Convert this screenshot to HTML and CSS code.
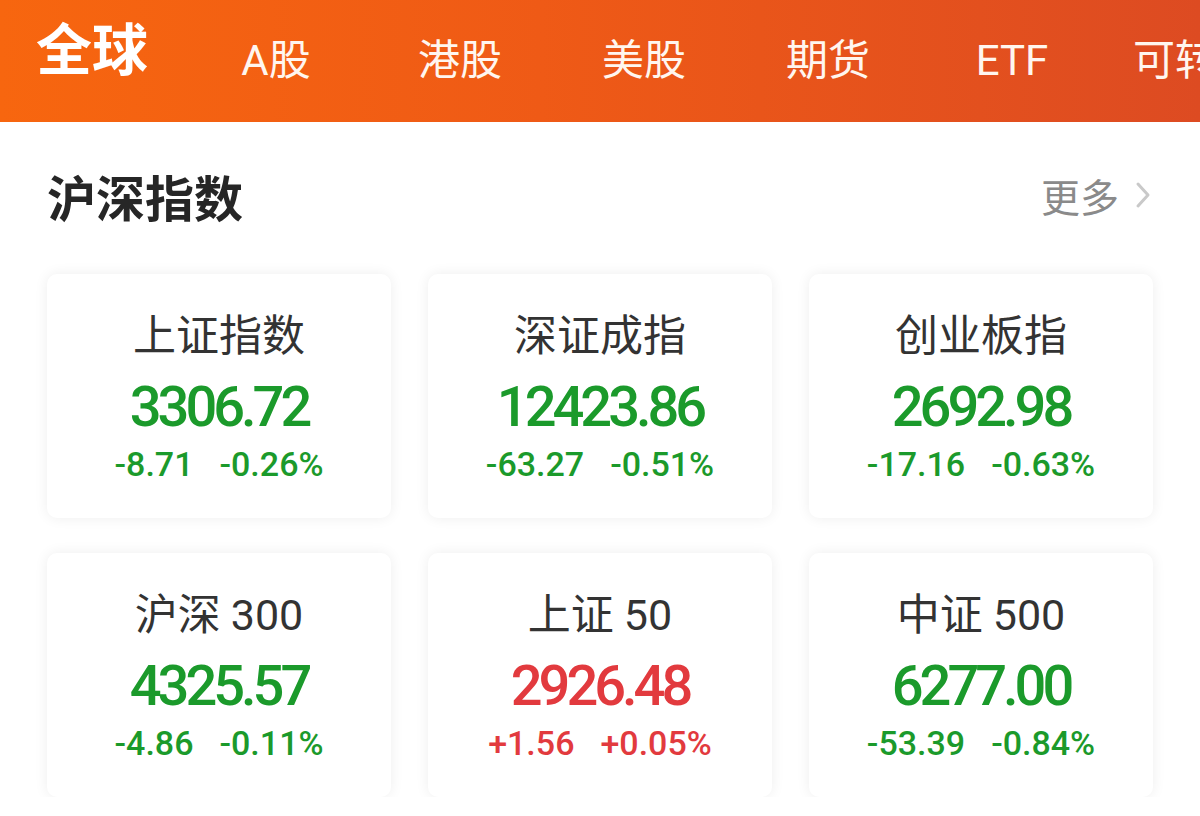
FILE: index.html
```html
<!DOCTYPE html>
<html lang="zh-CN">
<head>
  <meta charset="UTF-8">
  <meta name="viewport" content="width=device-width, initial-scale=1.0">
  <title>行情</title>
  <link rel="stylesheet" href="styles.css">
</head>
<body>
  <!-- 顶部市场切换 -->
  <div class="tabs">
    <div class="tab active">全球</div>
    <div class="tab">A股</div>
    <div class="tab">港股</div>
    <div class="tab">美股</div>
    <div class="tab">期货</div>
    <div class="tab">ETF</div>
    <div class="tab">可转债</div>
  </div>

  <div class="section">
    <div class="section-head">
      <div class="section-title">沪深指数</div>
      <div class="more">
        更多
        <svg class="chevron" width="16" height="28" viewBox="0 0 16 28">
          <polyline points="3,3 13,14 3,25" fill="none" stroke="#c9c9c9" stroke-width="3" stroke-linecap="round" stroke-linejoin="round"/>
        </svg>
      </div>
    </div>

    <div class="cards">
      <div class="card down">
        <div class="card-name">上证指数</div>
        <div class="card-price">3306.72</div>
        <div class="card-change"><span>-8.71</span><span>-0.26%</span></div>
      </div>
      <div class="card down">
        <div class="card-name">深证成指</div>
        <div class="card-price">12423.86</div>
        <div class="card-change"><span>-63.27</span><span>-0.51%</span></div>
      </div>
      <div class="card down">
        <div class="card-name">创业板指</div>
        <div class="card-price">2692.98</div>
        <div class="card-change"><span>-17.16</span><span>-0.63%</span></div>
      </div>
      <div class="card down">
        <div class="card-name">沪深<span class="name-num">300</span></div>
        <div class="card-price">4325.57</div>
        <div class="card-change"><span>-4.86</span><span>-0.11%</span></div>
      </div>
      <div class="card up">
        <div class="card-name">上证<span class="name-num">50</span></div>
        <div class="card-price">2926.48</div>
        <div class="card-change"><span>+1.56</span><span>+0.05%</span></div>
      </div>
      <div class="card down">
        <div class="card-name">中证<span class="name-num">500</span></div>
        <div class="card-price">6277.00</div>
        <div class="card-change"><span>-53.39</span><span>-0.84%</span></div>
      </div>
    </div>
  </div>
</body>
</html>
```

FILE: styles.css
```css
body {
  margin: 0;
  background: #fff;
  font-family: Roboto, "Noto Sans CJK SC", sans-serif;
  overflow: hidden;
}
.tabs {
  display: flex;
  align-items: center;
  height: 122px;
  background: linear-gradient(90deg, #f7660f 0%, #ef5a16 45%, #dd4b22 100%);
  overflow: hidden;
  white-space: nowrap;
}
.tab {
  flex: 0 0 184px;
  text-align: center;
  color: #fff6ef;
  font-size: 42px;
  line-height: 50px;
}
/* 当前选中的标签更大更粗 */
.tab.active {
  font-size: 56px;
  font-weight: bold;
  color: #fff;
  margin-bottom: 20px;
}
.section {
  padding: 0 47px;
}
.section-head {
  display: flex;
  align-items: center;
  justify-content: space-between;
  height: 146px;
}
.section-title {
  font-size: 49px;
  font-weight: bold;
  color: #262626;
}
.more {
  display: flex;
  align-items: center;
  gap: 16px;
  font-size: 39px;
  color: #8a8a8a;
  margin-right: 2px;
}
.cards {
  display: grid;
  grid-template-columns: repeat(3, 344px);
  grid-auto-rows: 244px;
  column-gap: 37px;
  row-gap: 35px;
  margin-top: 6px;
}
.card {
  background: #fff;
  border-radius: 10px;
  box-shadow: 0 0 14px rgba(0, 0, 0, 0.07);
  padding-top: 32px;
  text-align: center;
}
.card-name {
  font-size: 43px;
  line-height: 60px;
  color: #333;
}
.name-num {
  margin-left: 10px;
}
.card-price {
  font-size: 56px;
  font-weight: 500;
  letter-spacing: -4px;
  line-height: 82px;
}
.card-change {
  display: flex;
  justify-content: center;
  gap: 26px;
  font-size: 34px;
  font-weight: 500;
  line-height: 32px;
}
.down .card-price,
.down .card-change {
  color: #1b9a2b;
}
.up .card-price,
.up .card-change {
  color: #e23a3e;
}
```
